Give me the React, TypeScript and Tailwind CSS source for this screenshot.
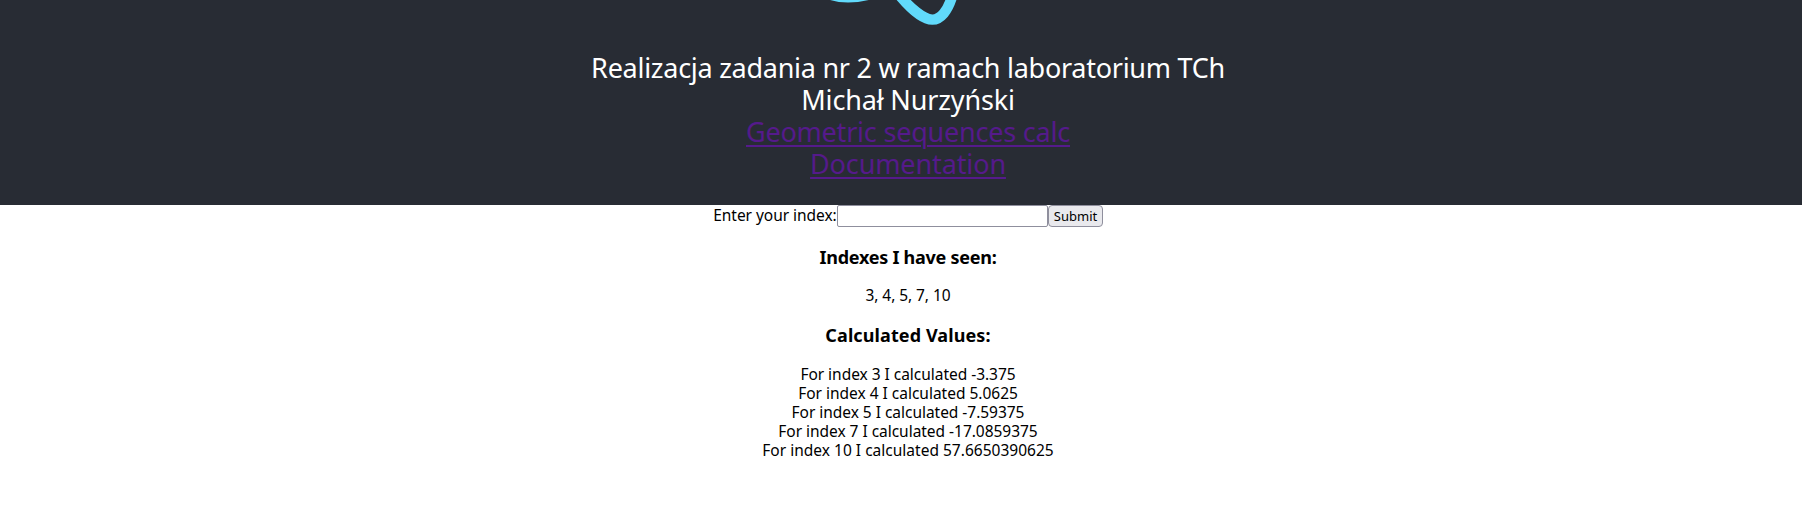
const calculated = [
  { index: 3, value: '-3.375', tracking: 'tracking-[-0.03px]' },
  { index: 4, value: '5.0625', tracking: 'tracking-[-0.01px]' },
  { index: 5, value: '-7.59375', tracking: 'tracking-[-0.03px]' },
  { index: 7, value: '-17.0859375', tracking: 'tracking-[-0.03px]' },
  { index: 10, value: '57.6650390625', tracking: 'tracking-[0.01px]' },
];

function Header() {
  return (
    <header className="flex h-[205px] flex-col items-center bg-[#282c34] text-[27px] leading-8 text-white">
      <svg className="h-[52px] w-[180px] shrink-0" viewBox="818 0 180 52" fill="none" stroke="#61dafb">
        <path strokeWidth="10.4" d="M896 -9C911 10 924.5 19.6 932.3 19.6C940.5 19.6 948 11 952.5 -5" />
        <path strokeWidth="10" d="M822 -9C837 -0.2 856 -0.2 880 -8.5" />
      </svg>
      <p className="tracking-[-0.27px]">Realizacja zadania nr 2 w ramach laboratorium TCh</p>
      <p className="tracking-[-0.16px]">Michał Nurzyński</p>
      <a
        href="#calc"
        className="tracking-[-0.21px] text-[#551a8b] underline decoration-2 underline-offset-[3px]"
      >
        Geometric sequences calc
      </a>
      <a
        href="#docs"
        className="tracking-[-0.12px] text-[#551a8b] underline decoration-2 underline-offset-[3px]"
      >
        Documentation
      </a>
    </header>
  );
}

export default function App() {
  return (
    <div className="h-[524px] w-full overflow-hidden bg-white font-['Noto_Sans',sans-serif] text-black">
      <div className="w-[1816px] text-center text-[15.5px] leading-[19px]">
        <Header />
        <form className="flex h-[22px] justify-center" onSubmit={(e) => e.preventDefault()}>
          <label htmlFor="index" className="w-[124px] pt-px tracking-[-0.04px] whitespace-nowrap">
            Enter your index:
          </label>
          <input
            id="index"
            className="h-[22px] w-[211px] rounded-[2px] border border-[#8f8f9d] bg-white px-1 outline-none"
          />
          <button className="h-[22px] w-[55px] rounded-[4px] border border-[#8f8f9d] bg-[#e9e9ed] text-[13px] leading-5">
            Submit
          </button>
        </form>
        <h3 className="mt-[19px] text-lg leading-[22px] font-bold tracking-[-0.25px]">Indexes I have seen:</h3>
        <p className="mt-[18px] tracking-[-0.06px]">3, 4, 5, 7, 10</p>
        <h3 className="mt-[19px] text-lg leading-[22px] font-bold tracking-[0.1px]">Calculated Values:</h3>
        <div className="mt-[19px]">
          {calculated.map(({ index, value, tracking }) => (
            <p key={index} className={tracking}>
              {`For index ${index} I calculated ${value}`}
            </p>
          ))}
        </div>
      </div>
    </div>
  );
}
